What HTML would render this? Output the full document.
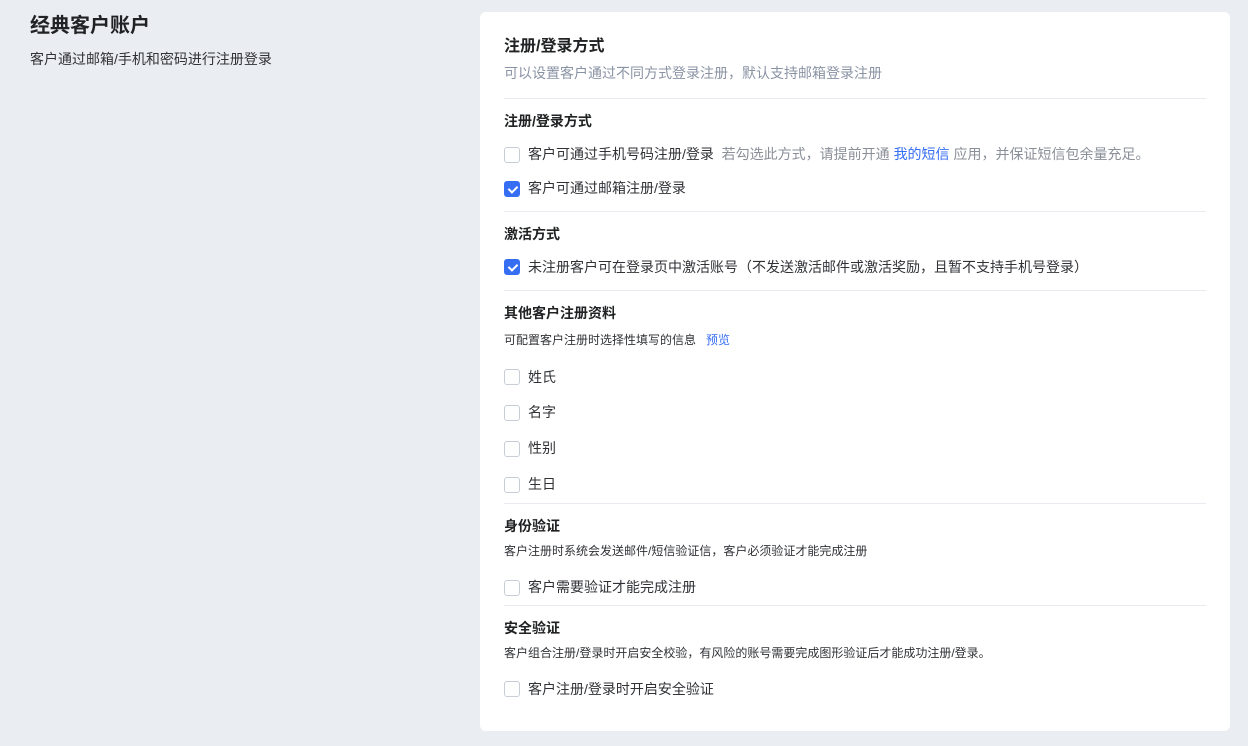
<!DOCTYPE html>
<html><head><meta charset="utf-8"><style>
*{margin:0;padding:0;box-sizing:border-box}
body{width:1248px;height:746px;background:#eaedf1;font-family:"Liberation Sans","Noto Sans CJK SC",sans-serif;color:#202223;position:relative;overflow:hidden}
.a{position:absolute;white-space:nowrap;line-height:20px}
.card{position:absolute;left:480px;top:12px;width:750px;height:719px;background:#fff;border-radius:6px}
.hr{position:absolute;left:504px;width:702px;height:1px;background:#e8ebef}
.h{font-size:14px;font-weight:bold;left:504px}
.s{font-size:12px;left:504px;color:#303236}
.r{font-size:14px;left:528px;color:#303236}
.cb{position:absolute;left:504px;width:16px;height:16px;border:1px solid #c9ced6;border-radius:3px;background:#fff}
.cb.on{background:#356df3;border-color:#356df3}
.cb.on:after{content:"";position:absolute;left:4.5px;top:2px;width:4px;height:7px;border:solid #fff;border-width:0 2px 2px 0;transform:rotate(45deg)}
.g{color:#8a8f98}.l{color:#356df3}
</style></head><body>
<div class="a" style="left:30px;top:13px;font-size:20px;font-weight:bold;line-height:26px">经典客户账户</div>
<div class="a" style="left:30px;top:49px;font-size:14px;color:#303236">客户通过邮箱/手机和密码进行注册登录</div>
<div class="card"></div>
<div class="a" style="left:504px;top:37px;font-size:16px;font-weight:bold">注册/登录方式</div>
<div class="a" style="left:504px;top:63px;font-size:14px;color:#8a93a4">可以设置客户通过不同方式登录注册，默认支持邮箱登录注册</div>
<div class="hr" style="top:98px"></div>
<div class="a h" style="top:111px">注册/登录方式</div>
<div class="cb" style="top:147px"></div><div class="a r" style="top:144px">客户可通过手机号码注册/登录 &nbsp;<span class="g">若勾选此方式，请提前开通 </span><span class="l">我的短信</span><span class="g"> 应用，并保证短信包余量充足。</span></div>
<div class="cb on" style="top:181px"></div><div class="a r" style="top:178px">客户可通过邮箱注册/登录</div>
<div class="hr" style="top:211px"></div>
<div class="a h" style="top:224px">激活方式</div>
<div class="cb on" style="top:259px"></div><div class="a r" style="top:257px">未注册客户可在登录页中激活账号（不发送激活邮件或激活奖励，且暂不支持手机号登录）</div>
<div class="hr" style="top:290px"></div>
<div class="a h" style="top:303px">其他客户注册资料</div>
<div class="a s" style="top:330px">可配置客户注册时选择性填写的信息 &nbsp;&nbsp;<span class="l">预览</span></div>
<div class="cb" style="top:369px"></div><div class="a r" style="top:367px">姓氏</div>
<div class="cb" style="top:405px"></div><div class="a r" style="top:402px">名字</div>
<div class="cb" style="top:441px"></div><div class="a r" style="top:438px">性别</div>
<div class="cb" style="top:477px"></div><div class="a r" style="top:474px">生日</div>
<div class="hr" style="top:503px"></div>
<div class="a h" style="top:516px">身份验证</div>
<div class="a s" style="top:541px">客户注册时系统会发送邮件/短信验证信，客户必须验证才能完成注册</div>
<div class="cb" style="top:580px"></div><div class="a r" style="top:577px">客户需要验证才能完成注册</div>
<div class="hr" style="top:605px"></div>
<div class="a h" style="top:618px">安全验证</div>
<div class="a s" style="top:643px">客户组合注册/登录时开启安全校验，有风险的账号需要完成图形验证后才能成功注册/登录。</div>
<div class="cb" style="top:681px"></div><div class="a r" style="top:679px">客户注册/登录时开启安全验证</div>
</body></html>
